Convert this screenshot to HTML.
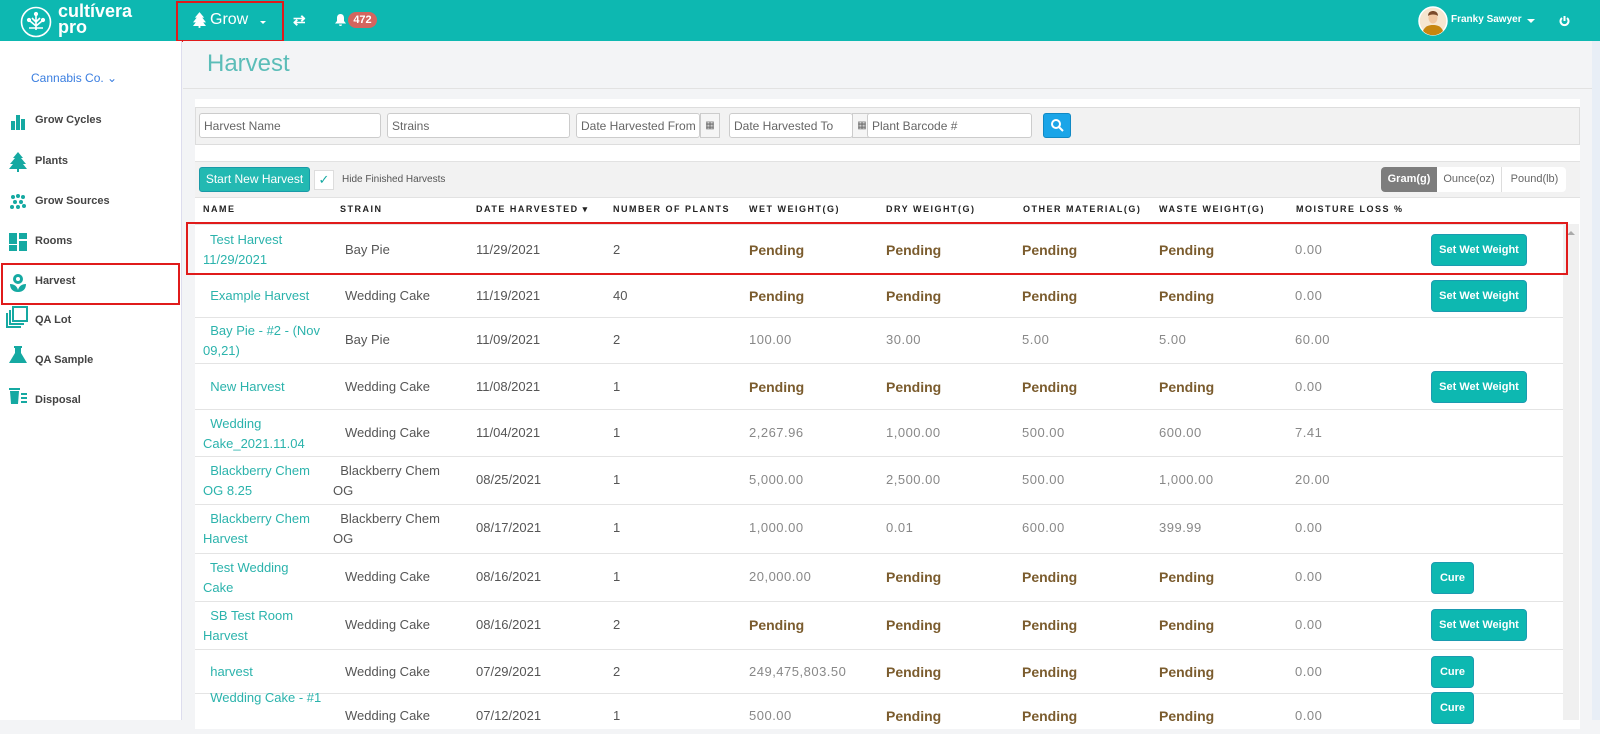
<!DOCTYPE html>
<html><head><meta charset="utf-8"><style>
*{box-sizing:border-box;margin:0;padding:0}
body{width:1600px;height:720px;overflow:hidden;font-family:"Liberation Sans",sans-serif;background:#f3f4f6;position:relative;color:#555}
.a{position:absolute}
.top{left:0;top:0;width:1600px;height:41px;background:#0db8b1}
.side{left:0;top:41px;width:182px;height:679px;background:#fff;border-right:1px solid #dde}
.si{position:absolute;left:35px;font-size:11px;color:#444;font-weight:bold}
.ic{position:absolute;left:8px;width:20px;height:20px}
.panel{left:195px;top:99px;width:1385px;height:630px;background:#fff}
.inp{position:absolute;top:113px;height:25px;border:1px solid #ccc;border-radius:3px;background:#fff;font-size:12px;color:#666;padding:5px 4px;white-space:nowrap;overflow:hidden}
.cal{position:absolute;top:113px;width:20px;height:25px;border:1px solid #ccc;background:#f5f5f5;font-size:10px;text-align:center;line-height:23px;color:#666}
.th{position:absolute;top:204px;font-size:9px;font-weight:bold;letter-spacing:1.5px;color:#222}
.row{position:absolute;left:195px;width:1368px;border-bottom:1px solid #e4e4e4}
.c{position:absolute;font-size:13px;line-height:20px;color:#555;white-space:nowrap}
.n{color:#2bb3ac;left:8px}
.p{font-weight:bold;color:#7b5c2e;font-size:14px}
.g{color:#888;font-size:13px;letter-spacing:0.5px}
.btn{position:absolute;background:#0db8b1;border:1px solid #1b9bb0;border-radius:4px;color:#fff;font-size:11px;font-weight:bold;height:32px;line-height:30px;text-align:center}
</style></head><body>
<div class="a top"></div>
<svg class="a" style="left:20px;top:6px" width="32" height="32" viewBox="0 0 32 32" fill="none" stroke="#fff" stroke-width="1.6"><circle cx="16" cy="16" r="14.5"/><path d="M16 24V9M16 20l-6-5M16 20l6-5M16 16l-4-4M16 16l4-4M9 22h14"/><circle cx="16" cy="8" r="1.3" fill="#fff"/><circle cx="9" cy="14" r="1.3" fill="#fff"/><circle cx="23" cy="14" r="1.3" fill="#fff"/></svg>
<div class="a" style="left:58px;top:3px;color:#fff;font-weight:bold;font-size:18px;line-height:16px">cultívera<br>pro</div>
<div class="a" style="left:176px;top:1px;width:108px;height:41px;border:2px solid #e01b1b"></div>
<svg class="a" style="left:193px;top:12px" width="13" height="16" viewBox="0 0 14 17" fill="#fff"><path d="M7 0L2 6h2L0 11h3L0 15h6v2h2v-2h6l-3-4h3l-4-5h2z"/></svg>
<div class="a" style="left:210px;top:11px;color:#fff;font-size:16px">Grow</div>
<div class="a" style="left:260px;top:21px;border-left:3px solid transparent;border-right:3px solid transparent;border-top:3px solid #fff"></div>
<div class="a" style="left:293px;top:11px;color:#fff;font-size:15px;font-weight:bold">⇄</div>
<svg class="a" style="left:335px;top:14px" width="11" height="12" viewBox="0 0 11 12" fill="#fff"><path d="M5.5 0C3 0 2 2 2 4v3L0 9.5h11L9 7V4C9 2 8 0 5.5 0zM4 10.5h3a1.5 1.5 0 01-3 0z"/></svg>
<div class="a" style="left:348px;top:12px;width:29px;height:16px;border-radius:8px;background:#d4655f;color:#fff;font-size:11px;font-weight:bold;text-align:center;line-height:16px">472</div>
<svg class="a" style="left:1418px;top:6px" width="30" height="30" viewBox="0 0 30 30"><circle cx="15" cy="15" r="14" fill="#f6e6d0" stroke="#fff" stroke-width="1.5"/><path d="M5 25c2-5 6-6 10-6s8 1 10 6a14 14 0 01-20 0z" fill="#c7860f"/><ellipse cx="15" cy="12" rx="4.5" ry="5.5" fill="#f1c7a0"/><path d="M10 10c0-4 3-5 5-5s5 1 5 5c-2-2-8-2-10 0z" fill="#7b4a2a"/></svg>
<div class="a" style="left:1451px;top:14px;color:#fff;font-size:10px;font-weight:bold">Franky Sawyer</div>
<div class="a" style="left:1527px;top:19px;border-left:4px solid transparent;border-right:4px solid transparent;border-top:4px solid #fff"></div>
<svg class="a" style="left:1559px;top:15px" width="11" height="12" viewBox="0 0 11 12" fill="none" stroke="#fff" stroke-width="2"><path d="M5.5 1v5M3 3a4 4 0 105 0"/></svg>

<div class="a side"></div>
<div class="a" style="left:31px;top:71px;font-size:12px;color:#3a7ee0">Cannabis Co. ⌄</div>
<svg class="ic" style="top:112px" viewBox="0 0 20 20" fill="#15a9a2"><rect x="3" y="9" width="4" height="9"/><rect x="8" y="3" width="4" height="15"/><rect x="13" y="7" width="4" height="11"/></svg><div class="si" style="top:114px">Grow Cycles</div>
<svg class="ic" style="top:152px" viewBox="0 0 20 20" fill="#15a9a2"><path d="M10 0L5 6h2L2 12h3L1 17h8v3h2v-3h8l-4-5h3l-5-6h2z"/></svg><div class="si" style="top:155px">Plants</div>
<svg class="ic" style="top:192px" viewBox="0 0 20 20" fill="#15a9a2"><circle cx="5" cy="5" r="2"/><circle cx="10" cy="4" r="2"/><circle cx="15" cy="5" r="2"/><circle cx="7" cy="10" r="2"/><circle cx="13" cy="10" r="2"/><circle cx="4" cy="15" r="2"/><circle cx="10" cy="15" r="2"/><circle cx="16" cy="14" r="2"/></svg><div class="si" style="top:195px">Grow Sources</div>
<svg class="ic" style="top:232px" viewBox="0 0 20 20" fill="#15a9a2"><rect x="1" y="1" width="8" height="11"/><rect x="11" y="1" width="8" height="6"/><rect x="1" y="13" width="8" height="6"/><rect x="11" y="9" width="8" height="10"/></svg><div class="si" style="top:235px">Rooms</div>
<div class="a" style="left:1px;top:263px;width:179px;height:42px;border:2px solid #e01b1b"></div>
<svg class="ic" style="top:273px" viewBox="0 0 20 20" fill="#15a9a2"><circle cx="10" cy="6" r="5"/><circle cx="10" cy="6" r="2" fill="#fff"/><path d="M2 11c4 0 7 2 8 6 1-4 4-6 8-6 0 5-3 8-8 8s-8-3-8-8z"/></svg><div class="si" style="top:275px">Harvest</div>
<svg class="ic" style="top:306px;width:22px;height:22px;left:6px" viewBox="0 0 22 22" fill="none" stroke="#15a9a2" stroke-width="2"><rect x="7" y="1" width="14" height="14"/><path d="M4 4v14h14M1 7v14h14"/></svg><div class="si" style="top:314px">QA Lot</div>
<svg class="ic" style="top:345px" viewBox="0 0 20 20" fill="#15a9a2"><path d="M6 1h8v2h-1v5l6 10H1L7 8V3H6z"/></svg><div class="si" style="top:354px">QA Sample</div>
<svg class="ic" style="top:385px" viewBox="0 0 20 20" fill="#15a9a2"><rect x="1" y="3" width="11" height="2"/><path d="M2 6h9l-1 13H3z"/><rect x="13" y="8" width="6" height="2"/><rect x="13" y="12" width="6" height="2"/><rect x="13" y="16" width="6" height="2"/></svg><div class="si" style="top:394px">Disposal</div>

<div class="a" style="left:183px;top:41px;width:1417px;height:48px;background:#f3f4f6;border-bottom:1px solid #e2e2e2"></div>
<div class="a" style="left:207px;top:50px;font-size:24px;color:#5bbdb8">Harvest</div>
<div class="a" style="left:1592px;top:41px;width:8px;height:679px;background:#e8eef6"></div>
<div class="a panel"></div>
<div class="a" style="left:195px;top:107px;width:1385px;height:38px;background:#f2f2f2;border:1px solid #ddd"></div>
<div class="inp" style="left:199px;width:182px">Harvest Name</div>
<div class="inp" style="left:387px;width:183px">Strains</div>
<div class="inp" style="left:576px;width:124px">Date Harvested From</div><div class="cal" style="left:700px">▦</div>
<div class="inp" style="left:729px;width:124px">Date Harvested To</div><div class="cal" style="left:852px">▦</div>
<div class="inp" style="left:867px;width:165px">Plant Barcode #</div>
<div class="a" style="left:1043px;top:113px;width:28px;height:25px;border-radius:3px;background:#1aa5e8;border:1px solid #1189c4"></div>
<svg class="a" style="left:1050px;top:118px" width="14" height="14" viewBox="0 0 14 14" fill="none" stroke="#fff" stroke-width="2"><circle cx="6" cy="6" r="4"/><path d="M9 9l4 4"/></svg>
<div class="a" style="left:195px;top:161px;width:1385px;height:37px;background:#f2f2f2;border-top:1px solid #e2e2e2;border-bottom:1px solid #e2e2e2"></div>
<div class="a" style="left:199px;top:167px;width:111px;height:25px;background:#23b9b2;border:1px solid #1a9aa8;border-radius:3px;color:#fff;font-size:12px;line-height:23px;text-align:center">Start New Harvest</div>
<div class="a" style="left:314px;top:170px;width:20px;height:20px;background:#fff;border:1px solid #ddd;color:#15a9a2;font-size:13px;text-align:center;line-height:18px">✓</div>
<div class="a" style="left:342px;top:174px;font-size:10px;color:#555">Hide Finished Harvests</div>
<div class="a" style="left:1381px;top:167px;width:185px;height:25px;border-radius:4px;background:#fff;font-size:11px;line-height:25px;color:#666;overflow:hidden">
<span style="position:absolute;left:0;width:56px;background:#7d7d7d;color:#fff;text-align:center;font-weight:bold">Gram(g)</span>
<span style="position:absolute;left:56px;width:65px;text-align:center;border-right:1px solid #ddd">Ounce(oz)</span>
<span style="position:absolute;left:122px;width:63px;text-align:center">Pound(lb)</span></div>
<div class="th" style="left:203px">NAME</div><div class="th" style="left:340px">STRAIN</div><div class="th" style="left:476px">DATE HARVESTED ▾</div><div class="th" style="left:613px">NUMBER OF PLANTS</div><div class="th" style="left:749px">WET WEIGHT(G)</div><div class="th" style="left:886px">DRY WEIGHT(G)</div><div class="th" style="left:1023px">OTHER MATERIAL(G)</div><div class="th" style="left:1159px">WASTE WEIGHT(G)</div><div class="th" style="left:1296px">MOISTURE LOSS %</div>
<div class="a" style="left:1563px;top:224px;width:16px;height:496px;background:#f0f0f0"></div>
<div class="a" style="left:1567px;top:231px;border-left:4px solid transparent;border-right:4px solid transparent;border-bottom:4px solid #aaa"></div>

<div class="row" style="top:224px;height:50px;border-top:1px solid #e4e4e4"><div class="c n" style="top:5px">&nbsp; Test Harvest<br>11/29/2021</div><div class="c" style="left:150px;top:15px">Bay Pie</div><div class="c" style="left:281px;top:15px">11/29/2021</div><div class="c" style="left:418px;top:15px">2</div><div class="c p" style="left:554px;top:15px">Pending</div><div class="c p" style="left:691px;top:15px">Pending</div><div class="c p" style="left:827px;top:15px">Pending</div><div class="c p" style="left:964px;top:15px">Pending</div><div class="c g" style="left:1100px;top:15px">0.00</div><div class="btn" style="left:1236px;top:9px;width:96px">Set Wet Weight</div></div>
<div class="a" style="left:186px;top:222px;width:1382px;height:53px;border:2px solid #e01b1b"></div>
<div class="row" style="top:274px;height:44px"><div class="c n" style="top:12px">&nbsp; Example Harvest</div><div class="c" style="left:150px;top:12px">Wedding Cake</div><div class="c" style="left:281px;top:12px">11/19/2021</div><div class="c" style="left:418px;top:12px">40</div><div class="c p" style="left:554px;top:12px">Pending</div><div class="c p" style="left:691px;top:12px">Pending</div><div class="c p" style="left:827px;top:12px">Pending</div><div class="c p" style="left:964px;top:12px">Pending</div><div class="c g" style="left:1100px;top:12px">0.00</div><div class="btn" style="left:1236px;top:6px;width:96px">Set Wet Weight</div></div>
<div class="row" style="top:318px;height:46px"><div class="c n" style="top:3px">&nbsp; Bay Pie - #2 - (Nov<br>09,21)</div><div class="c" style="left:150px;top:12px">Bay Pie</div><div class="c" style="left:281px;top:12px">11/09/2021</div><div class="c" style="left:418px;top:12px">2</div><div class="c g" style="left:554px;top:12px">100.00</div><div class="c g" style="left:691px;top:12px">30.00</div><div class="c g" style="left:827px;top:12px">5.00</div><div class="c g" style="left:964px;top:12px">5.00</div><div class="c g" style="left:1100px;top:12px">60.00</div></div>
<div class="row" style="top:364px;height:46px"><div class="c n" style="top:13px">&nbsp; New Harvest</div><div class="c" style="left:150px;top:13px">Wedding Cake</div><div class="c" style="left:281px;top:13px">11/08/2021</div><div class="c" style="left:418px;top:13px">1</div><div class="c p" style="left:554px;top:13px">Pending</div><div class="c p" style="left:691px;top:13px">Pending</div><div class="c p" style="left:827px;top:13px">Pending</div><div class="c p" style="left:964px;top:13px">Pending</div><div class="c g" style="left:1100px;top:13px">0.00</div><div class="btn" style="left:1236px;top:7px;width:96px">Set Wet Weight</div></div>
<div class="row" style="top:410px;height:47px"><div class="c n" style="top:4px">&nbsp; Wedding<br>Cake_2021.11.04</div><div class="c" style="left:150px;top:13px">Wedding Cake</div><div class="c" style="left:281px;top:13px">11/04/2021</div><div class="c" style="left:418px;top:13px">1</div><div class="c g" style="left:554px;top:13px">2,267.96</div><div class="c g" style="left:691px;top:13px">1,000.00</div><div class="c g" style="left:827px;top:13px">500.00</div><div class="c g" style="left:964px;top:13px">600.00</div><div class="c g" style="left:1100px;top:13px">7.41</div></div>
<div class="row" style="top:457px;height:48px"><div class="c n" style="top:4px">&nbsp; Blackberry Chem<br>OG 8.25</div><div class="c" style="left:138px;top:4px">&nbsp; Blackberry Chem<br>OG</div><div class="c" style="left:281px;top:13px">08/25/2021</div><div class="c" style="left:418px;top:13px">1</div><div class="c g" style="left:554px;top:13px">5,000.00</div><div class="c g" style="left:691px;top:13px">2,500.00</div><div class="c g" style="left:827px;top:13px">500.00</div><div class="c g" style="left:964px;top:13px">1,000.00</div><div class="c g" style="left:1100px;top:13px">20.00</div></div>
<div class="row" style="top:505px;height:49px"><div class="c n" style="top:4px">&nbsp; Blackberry Chem<br>Harvest</div><div class="c" style="left:138px;top:4px">&nbsp; Blackberry Chem<br>OG</div><div class="c" style="left:281px;top:13px">08/17/2021</div><div class="c" style="left:418px;top:13px">1</div><div class="c g" style="left:554px;top:13px">1,000.00</div><div class="c g" style="left:691px;top:13px">0.01</div><div class="c g" style="left:827px;top:13px">600.00</div><div class="c g" style="left:964px;top:13px">399.99</div><div class="c g" style="left:1100px;top:13px">0.00</div></div>
<div class="row" style="top:554px;height:48px"><div class="c n" style="top:4px">&nbsp; Test Wedding<br>Cake</div><div class="c" style="left:150px;top:13px">Wedding Cake</div><div class="c" style="left:281px;top:13px">08/16/2021</div><div class="c" style="left:418px;top:13px">1</div><div class="c g" style="left:554px;top:13px">20,000.00</div><div class="c p" style="left:691px;top:13px">Pending</div><div class="c p" style="left:827px;top:13px">Pending</div><div class="c p" style="left:964px;top:13px">Pending</div><div class="c g" style="left:1100px;top:13px">0.00</div><div class="btn" style="left:1236px;top:8px;width:43px">Cure</div></div>
<div class="row" style="top:602px;height:48px"><div class="c n" style="top:4px">&nbsp; SB Test Room<br>Harvest</div><div class="c" style="left:150px;top:13px">Wedding Cake</div><div class="c" style="left:281px;top:13px">08/16/2021</div><div class="c" style="left:418px;top:13px">2</div><div class="c p" style="left:554px;top:13px">Pending</div><div class="c p" style="left:691px;top:13px">Pending</div><div class="c p" style="left:827px;top:13px">Pending</div><div class="c p" style="left:964px;top:13px">Pending</div><div class="c g" style="left:1100px;top:13px">0.00</div><div class="btn" style="left:1236px;top:7px;width:96px">Set Wet Weight</div></div>
<div class="row" style="top:650px;height:44px"><div class="c n" style="top:12px">&nbsp; harvest</div><div class="c" style="left:150px;top:12px">Wedding Cake</div><div class="c" style="left:281px;top:12px">07/29/2021</div><div class="c" style="left:418px;top:12px">2</div><div class="c g" style="left:554px;top:12px">249,475,803.50</div><div class="c p" style="left:691px;top:12px">Pending</div><div class="c p" style="left:827px;top:12px">Pending</div><div class="c p" style="left:964px;top:12px">Pending</div><div class="c g" style="left:1100px;top:12px">0.00</div><div class="btn" style="left:1236px;top:6px;width:43px">Cure</div></div>
<div class="row" style="top:694px;height:40px;border:none"><div class="c n" style="top:-6px">&nbsp; Wedding Cake - #1</div><div class="c" style="left:150px;top:12px">Wedding Cake</div><div class="c" style="left:281px;top:12px">07/12/2021</div><div class="c" style="left:418px;top:12px">1</div><div class="c g" style="left:554px;top:12px">500.00</div><div class="c p" style="left:691px;top:12px">Pending</div><div class="c p" style="left:827px;top:12px">Pending</div><div class="c p" style="left:964px;top:12px">Pending</div><div class="c g" style="left:1100px;top:12px">0.00</div><div class="btn" style="left:1236px;top:-2px;width:43px">Cure</div></div>
</body></html>
